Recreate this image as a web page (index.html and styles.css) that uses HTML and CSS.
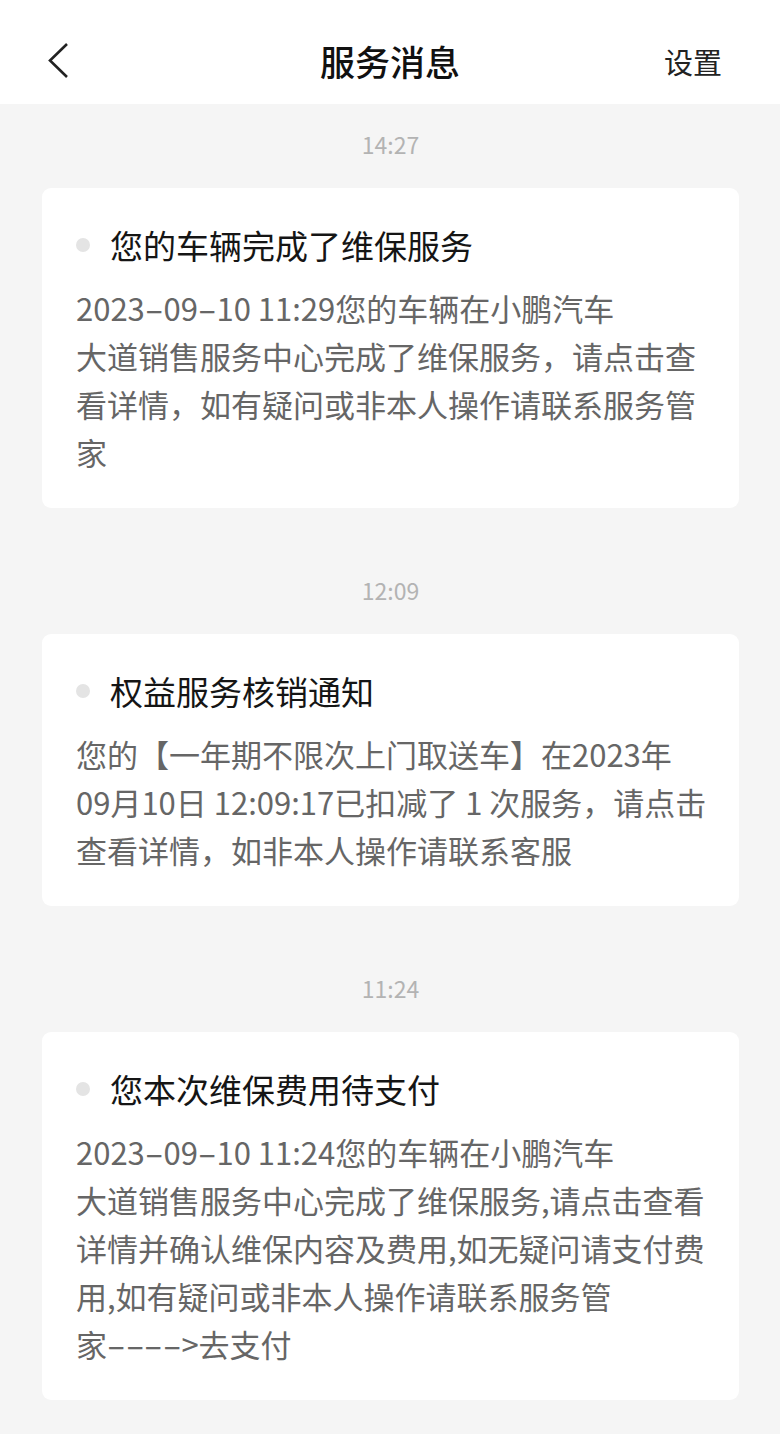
FILE: index.html
```html
<!DOCTYPE html>
<html lang="zh-CN">
<head>
<meta charset="utf-8">
<title>服务消息</title>
<link rel="stylesheet" href="styles.css">
</head>
<body>
<header class="nav">
  <div class="nav-back">
    <svg width="24" height="40" viewBox="0 0 24 40"><polyline points="21,3 4,19.5 21,36" fill="none" stroke="#222" stroke-width="2.6" stroke-linejoin="miter"/></svg>
  </div>
  <div class="nav-title">服务消息</div>
  <div class="nav-action">设置</div>
</header>
<main class="list">
  <section class="group">
    <div class="time">14:27</div>
    <div class="card">
      <div class="card-title"><span class="dot"></span>您的车辆完成了维保服务</div>
      <div class="card-body">2023<span class="dash">-</span>09<span class="dash">-</span>10 11:29您的车辆在小鹏汽车<br>大道销售服务中心完成了维保服务，请点击查<br>看详情，如有疑问或非本人操作请联系服务管<br>家</div>
    </div>
  </section>
  <section class="group">
    <div class="time">12:09</div>
    <div class="card">
      <div class="card-title"><span class="dot"></span>权益服务核销通知</div>
      <div class="card-body">您的【一年期不限次上门取送车】在2023年<br>09月10日 12:09:17已扣减了 1 次服务，请点击<br>查看详情，如非本人操作请联系客服</div>
    </div>
  </section>
  <section class="group">
    <div class="time">11:24</div>
    <div class="card">
      <div class="card-title"><span class="dot"></span>您本次维保费用待支付</div>
      <div class="card-body">2023<span class="dash">-</span>09<span class="dash">-</span>10 11:24您的车辆在小鹏汽车<br>大道销售服务中心完成了维保服务,请点击查看<br>详情并确认维保内容及费用,如无疑问请支付费<br>用,如有疑问或非本人操作请联系服务管<br>家<span class="dash">-</span><span class="dash">-</span><span class="dash">-</span><span class="dash">-</span>&gt;去支付</div>
    </div>
  </section>
</main>
</body>
</html>
```

FILE: styles.css
```css
* { box-sizing: border-box; }
html, body {
  margin: 0;
  padding: 0;
}
body {
  background: #f5f5f5;
  font-family: "Noto Sans CJK SC", "Noto Sans", sans-serif;
  width: 780px;
  min-height: 1434px;
}
.nav {
  height: 104px;
  background: #ffffff;
  display: grid;
  grid-template-columns: 1fr auto 1fr;
  align-items: center;
  padding: 17px 46px 0 46px;
}
.nav-back {
  width: 24px;
  height: 40px;
  display: flex;
  justify-self: start;
}
.nav-title {
  font-size: 35px;
  line-height: 44px;
  font-weight: 500;
  color: #111;
}
.nav-action {
  justify-self: end;
  padding-right: 12px;
  font-size: 29px;
  line-height: 40px;
  color: #222;
}
.list {
  padding: 24px 41px 0 42px;
  display: flex;
  flex-direction: column;
  gap: 66px;
}
.group {
  display: flex;
  flex-direction: column;
  gap: 28px;
}
.time {
  text-align: center;
  font-size: 23px;
  line-height: 32px;
  color: #b3b3b3;
}
.card {
  background: #ffffff;
  border-radius: 9px;
  padding: 33px 20px 32px 34px;
  display: flex;
  flex-direction: column;
  gap: 15px;
}
.card-title {
  display: flex;
  align-items: center;
  font-size: 33px;
  line-height: 48px;
  color: #151515;
}
.dot {
  width: 14px;
  height: 14px;
  border-radius: 50%;
  background: #e4e4e4;
  margin: 0 20px 0 0;
  flex: none;
}
.card-body {
  font-size: 31px;
  line-height: 48px;
  color: #666666;
  white-space: nowrap;
}
.dash {
  display: inline-block;
  width: 0.6em;
  text-align: center;
  transform: scaleX(1.8);
}
```
